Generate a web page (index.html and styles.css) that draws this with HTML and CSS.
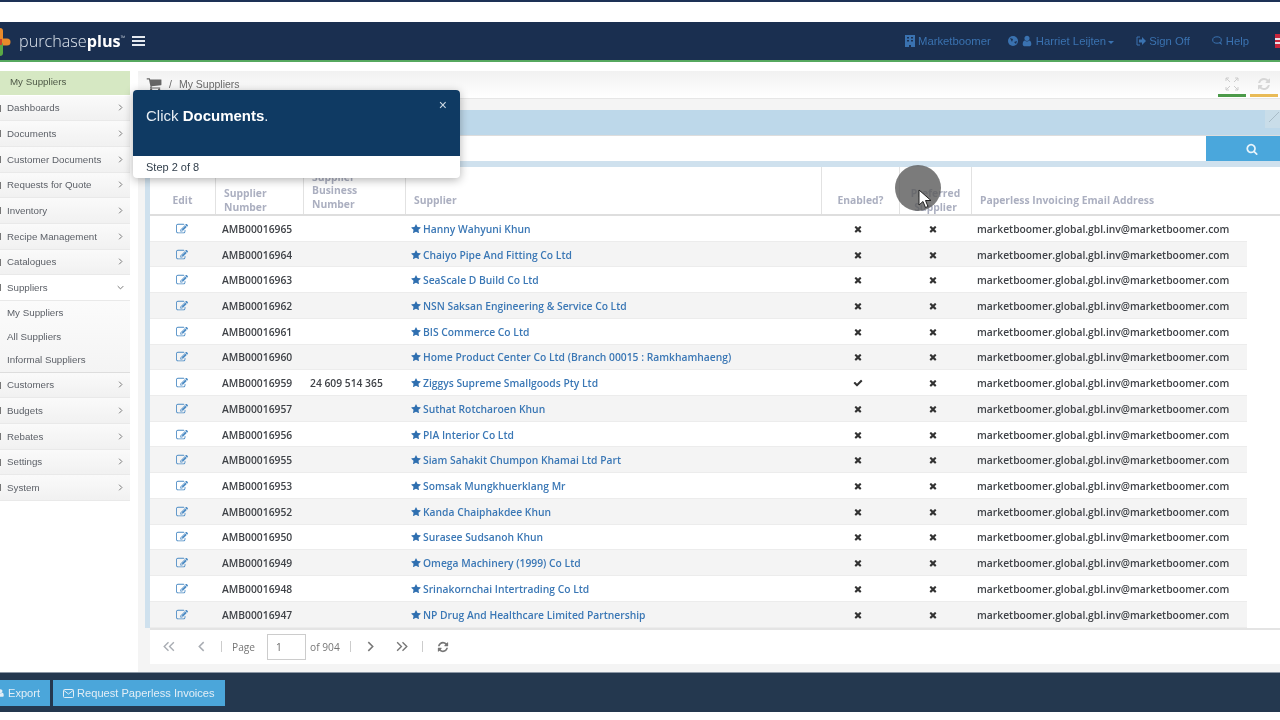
FILE: index.html
```html
<!DOCTYPE html>
<html>
<head>
  <title>My Suppliers</title>
  <link rel="stylesheet" href="styles.css">
</head>
<body>
  <svg class="defs" width="0" height="0">
    <symbol id="i-edit" viewBox="0 0 1792 1792"><path d="M888 1184l116-116-152-152-116 116v56h96v96h56zm440-720q-16-16-33 1l-350 350q-17 17-1 33t33-1l350-350q17-17 1-33zm80 594v190q0 119-84.5 203.5t-203.5 84.5h-832q-119 0-203.5-84.5t-84.5-203.5v-832q0-119 84.5-203.5t203.5-84.5h832q63 0 117 25 15 7 18 23 3 17-9 29l-49 49q-14 14-32 8-23-6-45-6h-832q-66 0-113 47t-47 113v832q0 66 47 113t113 47h832q66 0 113-47t47-113v-126q0-13 9-22l64-64q15-15 35-7t20 29zm-96-738l288 288-672 672h-288v-288zm444 132l-92 92-288-288 92-92q28-28 68-28t68 28l152 152q28 28 28 68t-28 68z"/></symbol>
    <symbol id="i-star" viewBox="0 0 1792 1792"><path d="M1728 647q0 22-26 48l-363 354 86 500q1 7 1 20 0 21-10.5 35.5t-30.5 14.5q-19 0-40-12l-449-236-449 236q-22 12-40 12-21 0-31.5-14.5t-10.5-35.5q0-6 2-20l86-500-364-354q-25-27-25-48 0-37 56-46l502-73 225-455q19-41 49-41t49 41l225 455 502 73q56 9 56 46z"/></symbol>
    <symbol id="i-times" viewBox="0 0 1792 1792"><path d="M1490 1322q0 40-28 68l-136 136q-28 28-68 28t-68-28l-294-294-294 294q-28 28-68 28t-68-28l-136-136q-28-28-28-68t28-68l294-294-294-294q-28-28-28-68t28-68l136-136q28-28 68-28t68 28l294 294 294-294q28-28 68-28t68 28l136 136q28 28 28 68t-28 68l-294 294 294 294q28 28 28 68z"/></symbol>
    <symbol id="i-check" viewBox="0 0 1792 1792"><path d="M1671 566q0 40-28 68l-724 724-136 136q-28 28-68 28t-68-28l-136-136-362-362q-28-28-28-68t28-68l136-136q28-28 68-28t68 28l294 295 656-657q28-28 68-28t68 28l136 136q28 28 28 68z"/></symbol>
    <symbol id="i-search" viewBox="0 0 1792 1792"><path d="M1216 832q0-185-131.5-316.5t-316.5-131.5-316.5 131.5-131.5 316.5 131.5 316.5 316.5 131.5 316.5-131.5 131.5-316.5zm512 832q0 52-38 90t-90 38q-54 0-90-38l-343-342q-179 124-399 124-143 0-273.5-55.5t-225-150-150-225-55.5-273.5 55.5-273.5 150-225 225-150 273.5-55.5 273.5 55.5 225 150 150 225 55.5 273.5q0 220-124 399l343 343q37 37 37 90z"/></symbol>
    <symbol id="i-refresh" viewBox="0 0 1792 1792"><path d="M1639 1056q0 5-1 7-64 268-268 434.5t-478 166.5q-146 0-282.5-55t-243.5-157l-129 129q-19 19-45 19t-45-19-19-45v-448q0-26 19-45t45-19h448q26 0 45 19t19 45-19 45l-137 137q71 66 161 102t187 36q134 0 250-65t186-179q11-17 53-117 8-23 30-23h192q13 0 22.5 9.5t9.5 22.5zm25-800v448q0 26-19 45t-45 19h-448q-26 0-45-19t-19-45 19-45l138-138q-148-137-349-137-134 0-250 65t-186 179q-11 17-53 117-8 23-30 23h-199q-13 0-22.5-9.5t-9.5-22.5v-7q65-268 270-434.5t480-166.5q146 0 284 55.5t245 156.5l130-129q19-19 45-19t45 19 19 45z"/></symbol>
    <symbol id="i-user" viewBox="0 0 1792 1792"><path d="M1536 1399q0 109-62.5 187t-150.5 78h-854q-88 0-150.5-78t-62.5-187q0-85 8.5-160.5t31.5-152 58.5-131 94-89 134.5-34.5q131 128 313 128t313-128q76 0 134.5 34.5t94 89 58.5 131 31.5 152 8.5 160.5zm-256-887q0 159-112.5 271.5t-271.5 112.5-271.5-112.5-112.5-271.5 112.5-271.5 271.5-112.5 271.5 112.5 112.5 271.5z"/></symbol>
    <symbol id="i-cart" viewBox="0 0 1792 1792"><path d="M704 1536q0 52-38 90t-90 38-90-38-38-90 38-90 90-38 90 38 38 90zm896 0q0 52-38 90t-90 38-90-38-38-90 38-90 90-38 90 38 38 90zm128-1088v512q0 24-16.5 42.5t-40.5 21.5l-1044 122q13 60 13 70 0 16-24 64h920q26 0 45 19t19 45-19 45-45 19h-1024q-26 0-45-19t-19-45q0-11 8-31.5t16-36 21.5-40 15.5-29.5l-177-823h-204q-26 0-45-19t-19-45 19-45 45-19h256q16 0 28.5 6.5t19.5 15.5 13 24.5 8 26 5.5 29.5 4.5 26h1201q26 0 45 19t19 45z"/></symbol>
    <symbol id="i-right" viewBox="0 0 10 10"><polyline points="3,1 7,5 3,9" fill="none" stroke="currentColor" stroke-width="1.4"/></symbol>
    <symbol id="i-left" viewBox="0 0 10 10"><polyline points="7,1 3,5 7,9" fill="none" stroke="currentColor" stroke-width="1.4"/></symbol>
    <symbol id="i-down" viewBox="0 0 10 10"><polyline points="1,3 5,7 9,3" fill="none" stroke="currentColor" stroke-width="1.4"/></symbol>
    <symbol id="i-first" viewBox="0 0 14 10"><polyline points="7,1 3,5 7,9" fill="none" stroke="currentColor" stroke-width="1.3"/><polyline points="12,1 8,5 12,9" fill="none" stroke="currentColor" stroke-width="1.3"/></symbol>
    <symbol id="i-last" viewBox="0 0 14 10"><polyline points="2,1 6,5 2,9" fill="none" stroke="currentColor" stroke-width="1.3"/><polyline points="7,1 11,5 7,9" fill="none" stroke="currentColor" stroke-width="1.3"/></symbol>
  </svg>

  <div class="page">
    <div class="topline"></div>

    <div class="navbar">
      <svg class="logo-mark" viewBox="0 0 26 28" width="26" height="28">
        <path d="M13 3v8" stroke="#e98a2b" stroke-width="6" stroke-linecap="round"/>
        <path d="M13 14h7" stroke="#e98a2b" stroke-width="7" stroke-linecap="round"/>
        <path d="M13 17v8" stroke="#5aa845" stroke-width="6" stroke-linecap="round"/>
        <path d="M9 14h6" stroke="#c8452e" stroke-width="6"/>
      </svg>
      <span class="logo-text">purchase<b>plus</b><sup>™</sup></span>
      <span class="burger"><i></i><i></i><i></i></span>
      <div class="nav-links">
        <a class="nav-link nav-market">
          <svg width="10" height="12" viewBox="0 0 10 12"><path d="M0 0h10v12H6v-2H4v2H0zM2 2v1.500h2V2zM6 2v1.500h2V2zM2 5v1.500h2V5zM6 5v1.500h2V5z" fill="currentColor" fill-rule="evenodd"/></svg>
          Marketboomer
        </a>
        <a class="nav-link nav-user">
          <svg width="10" height="10" viewBox="0 0 10 10"><circle cx="5" cy="5" r="5" fill="currentColor"/><path d="M2 2l3 1-1 3zM6 6l3-1-1 3z" fill="#1a2f50"/></svg>
          <svg width="12" height="12"><use href="#i-user"/></svg>
          Harriet Leijten<span class="caret"></span>
        </a>
        <a class="nav-link nav-sign">
          <svg width="10" height="10" viewBox="0 0 10 10"><path d="M4 1H1v8h3" fill="none" stroke="currentColor"/><path d="M3 3.500h3V1l4 4-4 4V6.500H3z" fill="currentColor"/></svg>
          Sign Off
        </a>
        <a class="nav-link nav-help">
          <svg width="11" height="10" viewBox="0 0 11 10"><ellipse cx="5" cy="4" rx="4.300" ry="3.200" fill="none" stroke="currentColor"/><path d="M7 7l3 2-1-3" fill="currentColor"/></svg>
          Help
        </a>
        <span class="flag"></span>
      </div>
    </div>
    <div class="navline"></div>

    <div class="main">
      <div class="sidebar">
        <div class="side-current">My Suppliers</div>
        <a class="side-item">Dashboards<svg class="side-arrow"><use href="#i-right"/></svg></a>
        <a class="side-item">Documents<svg class="side-arrow"><use href="#i-right"/></svg></a>
        <a class="side-item">Customer Documents<svg class="side-arrow"><use href="#i-right"/></svg></a>
        <a class="side-item">Requests for Quote<svg class="side-arrow"><use href="#i-right"/></svg></a>
        <a class="side-item">Inventory<svg class="side-arrow"><use href="#i-right"/></svg></a>
        <a class="side-item">Recipe Management<svg class="side-arrow"><use href="#i-right"/></svg></a>
        <a class="side-item">Catalogues<svg class="side-arrow"><use href="#i-right"/></svg></a>
        <a class="side-item side-open">Suppliers<svg class="side-arrow"><use href="#i-down"/></svg></a>
        <div class="side-sub">
          <a>My Suppliers</a>
          <a>All Suppliers</a>
          <a>Informal Suppliers</a>
        </div>
        <a class="side-item">Customers<svg class="side-arrow"><use href="#i-right"/></svg></a>
        <a class="side-item">Budgets<svg class="side-arrow"><use href="#i-right"/></svg></a>
        <a class="side-item">Rebates<svg class="side-arrow"><use href="#i-right"/></svg></a>
        <a class="side-item">Settings<svg class="side-arrow"><use href="#i-right"/></svg></a>
        <a class="side-item">System<svg class="side-arrow"><use href="#i-right"/></svg></a>
      </div>

      <div class="content">
        <div class="crumbs">
          <svg class="crumb-cart" width="16" height="16"><use href="#i-cart"/></svg>
          <span class="crumb-sep">/</span>
          <span>My Suppliers</span>
          <div class="crumb-tools">
            <span class="tool tool-green">
              <svg width="14" height="14" viewBox="0 0 14 14"><path d="M1 1l4 4M13 1L9 5M1 13l4-4M13 13L9 9M1 1h3M1 1v3M13 1h-3M13 1v3M1 13h3M1 13v-3M13 13h-3M13 13v-3" stroke="#ccc" fill="none"/></svg>
            </span>
            <span class="tool tool-yellow"><svg width="14" height="14" class="tool-refresh"><use href="#i-refresh"/></svg></span>
          </div>
        </div>

        <div class="panel">
          <div class="band"><span class="band-btn"><svg width="14" height="14" viewBox="0 0 14 14"><path d="M4 12L14 2" stroke="#a9bcc8"/></svg></span></div>
          <div class="search">
            <div class="search-input"></div>
            <div class="search-btn"><svg width="12" height="12"><use href="#i-search"/></svg></div>
          </div>
          <div class="band-thin"></div>

          <div class="grid-head">
            <div class="th th-center th-one">Edit</div>
            <div class="th">Supplier<br>Number</div>
            <div class="th th-three">Supplier<br>Business<br>Number</div>
            <div class="th th-one">Supplier</div>
            <div class="th th-center th-one">Enabled?</div>
            <div class="th th-center">Preferred<br>Supplier</div>
            <div class="th th-one">Paperless Invoicing Email Address</div>
          </div>

          <div class="row">
            <div class="c-edit"><svg><use href="#i-edit"/></svg></div><div class="c-num">AMB00016965</div><div class="c-abn"></div>
            <a class="c-name"><svg><use href="#i-star"/></svg>Hanny Wahyuni Khun</a>
            <div class="c-flag"><svg><use href="#i-times"/></svg></div><div class="c-flag"><svg><use href="#i-times"/></svg></div>
            <div class="c-mail">marketboomer.global.gbl.inv@marketboomer.com</div>
          </div>
          <div class="row">
            <div class="c-edit"><svg><use href="#i-edit"/></svg></div><div class="c-num">AMB00016964</div><div class="c-abn"></div>
            <a class="c-name"><svg><use href="#i-star"/></svg>Chaiyo Pipe And Fitting Co Ltd</a>
            <div class="c-flag"><svg><use href="#i-times"/></svg></div><div class="c-flag"><svg><use href="#i-times"/></svg></div>
            <div class="c-mail">marketboomer.global.gbl.inv@marketboomer.com</div>
          </div>
          <div class="row">
            <div class="c-edit"><svg><use href="#i-edit"/></svg></div><div class="c-num">AMB00016963</div><div class="c-abn"></div>
            <a class="c-name"><svg><use href="#i-star"/></svg>SeaScale D Build Co Ltd</a>
            <div class="c-flag"><svg><use href="#i-times"/></svg></div><div class="c-flag"><svg><use href="#i-times"/></svg></div>
            <div class="c-mail">marketboomer.global.gbl.inv@marketboomer.com</div>
          </div>
          <div class="row">
            <div class="c-edit"><svg><use href="#i-edit"/></svg></div><div class="c-num">AMB00016962</div><div class="c-abn"></div>
            <a class="c-name"><svg><use href="#i-star"/></svg>NSN Saksan Engineering &amp; Service Co Ltd</a>
            <div class="c-flag"><svg><use href="#i-times"/></svg></div><div class="c-flag"><svg><use href="#i-times"/></svg></div>
            <div class="c-mail">marketboomer.global.gbl.inv@marketboomer.com</div>
          </div>
          <div class="row">
            <div class="c-edit"><svg><use href="#i-edit"/></svg></div><div class="c-num">AMB00016961</div><div class="c-abn"></div>
            <a class="c-name"><svg><use href="#i-star"/></svg>BIS Commerce Co Ltd</a>
            <div class="c-flag"><svg><use href="#i-times"/></svg></div><div class="c-flag"><svg><use href="#i-times"/></svg></div>
            <div class="c-mail">marketboomer.global.gbl.inv@marketboomer.com</div>
          </div>
          <div class="row">
            <div class="c-edit"><svg><use href="#i-edit"/></svg></div><div class="c-num">AMB00016960</div><div class="c-abn"></div>
            <a class="c-name"><svg><use href="#i-star"/></svg>Home Product Center Co Ltd (Branch 00015 : Ramkhamhaeng)</a>
            <div class="c-flag"><svg><use href="#i-times"/></svg></div><div class="c-flag"><svg><use href="#i-times"/></svg></div>
            <div class="c-mail">marketboomer.global.gbl.inv@marketboomer.com</div>
          </div>
          <div class="row">
            <div class="c-edit"><svg><use href="#i-edit"/></svg></div><div class="c-num">AMB00016959</div><div class="c-abn">24 609 514 365</div>
            <a class="c-name"><svg><use href="#i-star"/></svg>Ziggys Supreme Smallgoods Pty Ltd</a>
            <div class="c-flag"><svg><use href="#i-check"/></svg></div><div class="c-flag"><svg><use href="#i-times"/></svg></div>
            <div class="c-mail">marketboomer.global.gbl.inv@marketboomer.com</div>
          </div>
          <div class="row">
            <div class="c-edit"><svg><use href="#i-edit"/></svg></div><div class="c-num">AMB00016957</div><div class="c-abn"></div>
            <a class="c-name"><svg><use href="#i-star"/></svg>Suthat Rotcharoen Khun</a>
            <div class="c-flag"><svg><use href="#i-times"/></svg></div><div class="c-flag"><svg><use href="#i-times"/></svg></div>
            <div class="c-mail">marketboomer.global.gbl.inv@marketboomer.com</div>
          </div>
          <div class="row">
            <div class="c-edit"><svg><use href="#i-edit"/></svg></div><div class="c-num">AMB00016956</div><div class="c-abn"></div>
            <a class="c-name"><svg><use href="#i-star"/></svg>PIA Interior Co Ltd</a>
            <div class="c-flag"><svg><use href="#i-times"/></svg></div><div class="c-flag"><svg><use href="#i-times"/></svg></div>
            <div class="c-mail">marketboomer.global.gbl.inv@marketboomer.com</div>
          </div>
          <div class="row">
            <div class="c-edit"><svg><use href="#i-edit"/></svg></div><div class="c-num">AMB00016955</div><div class="c-abn"></div>
            <a class="c-name"><svg><use href="#i-star"/></svg>Siam Sahakit Chumpon Khamai Ltd Part</a>
            <div class="c-flag"><svg><use href="#i-times"/></svg></div><div class="c-flag"><svg><use href="#i-times"/></svg></div>
            <div class="c-mail">marketboomer.global.gbl.inv@marketboomer.com</div>
          </div>
          <div class="row">
            <div class="c-edit"><svg><use href="#i-edit"/></svg></div><div class="c-num">AMB00016953</div><div class="c-abn"></div>
            <a class="c-name"><svg><use href="#i-star"/></svg>Somsak Mungkhuerklang Mr</a>
            <div class="c-flag"><svg><use href="#i-times"/></svg></div><div class="c-flag"><svg><use href="#i-times"/></svg></div>
            <div class="c-mail">marketboomer.global.gbl.inv@marketboomer.com</div>
          </div>
          <div class="row">
            <div class="c-edit"><svg><use href="#i-edit"/></svg></div><div class="c-num">AMB00016952</div><div class="c-abn"></div>
            <a class="c-name"><svg><use href="#i-star"/></svg>Kanda Chaiphakdee Khun</a>
            <div class="c-flag"><svg><use href="#i-times"/></svg></div><div class="c-flag"><svg><use href="#i-times"/></svg></div>
            <div class="c-mail">marketboomer.global.gbl.inv@marketboomer.com</div>
          </div>
          <div class="row">
            <div class="c-edit"><svg><use href="#i-edit"/></svg></div><div class="c-num">AMB00016950</div><div class="c-abn"></div>
            <a class="c-name"><svg><use href="#i-star"/></svg>Surasee Sudsanoh Khun</a>
            <div class="c-flag"><svg><use href="#i-times"/></svg></div><div class="c-flag"><svg><use href="#i-times"/></svg></div>
            <div class="c-mail">marketboomer.global.gbl.inv@marketboomer.com</div>
          </div>
          <div class="row">
            <div class="c-edit"><svg><use href="#i-edit"/></svg></div><div class="c-num">AMB00016949</div><div class="c-abn"></div>
            <a class="c-name"><svg><use href="#i-star"/></svg>Omega Machinery (1999) Co Ltd</a>
            <div class="c-flag"><svg><use href="#i-times"/></svg></div><div class="c-flag"><svg><use href="#i-times"/></svg></div>
            <div class="c-mail">marketboomer.global.gbl.inv@marketboomer.com</div>
          </div>
          <div class="row">
            <div class="c-edit"><svg><use href="#i-edit"/></svg></div><div class="c-num">AMB00016948</div><div class="c-abn"></div>
            <a class="c-name"><svg><use href="#i-star"/></svg>Srinakornchai Intertrading Co Ltd</a>
            <div class="c-flag"><svg><use href="#i-times"/></svg></div><div class="c-flag"><svg><use href="#i-times"/></svg></div>
            <div class="c-mail">marketboomer.global.gbl.inv@marketboomer.com</div>
          </div>
          <div class="row">
            <div class="c-edit"><svg><use href="#i-edit"/></svg></div><div class="c-num">AMB00016947</div><div class="c-abn"></div>
            <a class="c-name"><svg><use href="#i-star"/></svg>NP Drug And Healthcare Limited Partnership</a>
            <div class="c-flag"><svg><use href="#i-times"/></svg></div><div class="c-flag"><svg><use href="#i-times"/></svg></div>
            <div class="c-mail">marketboomer.global.gbl.inv@marketboomer.com</div>
          </div>
        </div>

        <div class="pager">
          <svg class="pg-first"><use href="#i-first"/></svg>
          <svg class="pg-prev"><use href="#i-left"/></svg>
          <span class="pg-sep pg-sep-a"></span>
          <span class="pg-text">Page</span>
          <span class="pg-input">1</span>
          <span class="pg-text">of 904</span>
          <span class="pg-sep pg-sep-b"></span>
          <svg class="pg-next"><use href="#i-right"/></svg>
          <svg class="pg-last"><use href="#i-last"/></svg>
          <span class="pg-sep pg-sep-c"></span>
          <svg class="pg-reload"><use href="#i-refresh"/></svg>
        </div>
      </div>
    </div>

    <div class="footer">
      <a class="btn btn-export">
        <svg width="9" height="10" class="btn-ico"><use href="#i-user"/></svg>Export
      </a>
      <a class="btn">
        <svg width="11" height="9" viewBox="0 0 11 9" class="btn-ico"><rect x=".5" y=".5" width="10" height="8" rx="1" fill="none" stroke="currentColor"/><polyline points="1,1.500 5.500,5 10,1.500" fill="none" stroke="currentColor"/></svg>Request Paperless Invoices
      </a>
    </div>

    <!-- tour popover and recorded mouse pointer sit over the page -->
    <div class="tour">
      <div class="tour-body">
        Click <b>Documents</b>.
        <span class="tour-close">×</span>
      </div>
      <div class="tour-foot">Step 2 of 8</div>
    </div>
    <div class="pointer-dot"></div>
    <svg class="pointer" width="14" height="20" viewBox="0 0 14 20"><path d="M1 1v15l4-3.500 2.500 6 2.500-1-2.500-6H13z" fill="#fff" stroke="#222" stroke-width="1"/></svg>
  </div>
</body>
</html>
```

FILE: styles.css
```css
html, body {
  margin: 0;
  padding: 0;
  height: 720px;
  overflow: hidden;
  background-color: #fff;
}

.defs {
  position: absolute;
}

.page {
  position: relative;
  display: flex;
  flex-direction: column;
  width: 1280px;
  height: 720px;
  overflow: hidden;
  background-color: #fff;
  font-family: "Liberation Sans", Arial, sans-serif;
  filter: blur(0.45px);
}

a {
  color: inherit;
  text-decoration: none;
}

svg {
  fill: currentColor;
}

.topline {
  height: 2px;
  margin-bottom: 20px;
  background-color: #1d3156;
}

/* navbar */

.navbar {
  display: flex;
  align-items: center;
  height: 38px;
  flex-shrink: 0;
  background-color: #1a2f50;
  color: #3a72b0;
  font-size: 11.3px;
}

.navline {
  height: 2px;
  flex-shrink: 0;
  margin-bottom: 9px;
  background-color: #56a85f;
}

.logo-mark {
  margin-left: -13px;
  margin-top: 2px;
  flex-shrink: 0;
}

.logo-text {
  margin-left: 6px;
  color: #dfe6ee;
  font-family: "Open Sans", sans-serif;
  font-size: 16.2px;
  font-weight: 300;
}

.logo-text b {
  font-weight: 700;
  color: #fff;
}

.logo-text sup {
  font-size: 6px;
  vertical-align: 7px;
  line-height: 0;
}

.burger {
  display: flex;
  flex-direction: column;
  gap: 2px;
  margin-left: 7px;
}

.burger i {
  display: block;
  width: 13px;
  height: 2px;
  background-color: #e4e9ef;
}

.nav-links {
  display: flex;
  align-items: center;
  margin-left: auto;
}

.nav-link {
  display: flex;
  align-items: center;
  gap: 3px;
  white-space: nowrap;
}

.nav-user {
  margin-left: 17px;
}

.nav-sign {
  margin-left: 22px;
}

.nav-help {
  margin-left: 22px;
}

.caret {
  width: 0;
  height: 0;
  margin-left: -1px;
  margin-top: 2px;
  border-top: 3px solid #3a72b0;
  border-left: 3px solid transparent;
  border-right: 3px solid transparent;
}

.flag {
  display: block;
  width: 9px;
  height: 14px;
  margin-left: 26px;
  margin-right: -4px;
  background: linear-gradient(#c9263c 30%, #e9dfe6 30%, #e9dfe6 45%, #c9263c 45%, #c9263c 60%, #e9dfe6 60%, #e9dfe6 70%, #c9263c 70%);
}

/* main area */

.main {
  display: flex;
  flex: 1;
  min-height: 0;
}

.sidebar {
  width: 130px;
  flex-shrink: 0;
  margin-right: 8px;
  color: #5d6168;
  font-size: 9.75px;
}

.side-current {
  height: 23.5px;
  line-height: 22.5px;
  margin-bottom: 1px;
  padding-left: 10px;
  background-color: #d6e8c3;
  color: #4f5a48;
}

.side-item {
  position: relative;
  display: flex;
  align-items: center;
  justify-content: space-between;
  box-sizing: border-box;
  height: 25.7px;
  padding: 0 6px 0 7px;
  background: linear-gradient(#fafafa, #f1f1f1);
  border-bottom: 1px solid #e9e9e9;
}

.side-item::before {
  content: "";
  position: absolute;
  left: 0;
  top: 9px;
  width: 1px;
  height: 7px;
  background-color: #777;
}

.side-open {
  background: #fff;
}

.side-arrow {
  width: 7px;
  height: 7px;
  color: #777;
}

.side-sub {
  display: flex;
  flex-direction: column;
  height: 71.5px;
  background: linear-gradient(#fbfbfb, #f4f4f4);
  border-bottom: 1px solid #ddd;
  box-sizing: border-box;
}

.side-sub a {
  height: 23.5px;
  line-height: 23.5px;
  padding-left: 7px;
}

.content {
  display: flex;
  flex-direction: column;
  flex: 1;
  min-width: 0;
  background-color: #f4f4f4;
}

.crumbs {
  display: flex;
  align-items: center;
  gap: 6px;
  box-sizing: border-box;
  height: 28px;
  padding: 0 2px 1px 8px;
  margin-bottom: 11px;
  background: linear-gradient(#f1f1f1, #fff);
  border-bottom: 1px solid #e6e6e6;
  color: #6a6a6a;
  font-size: 10.5px;
}

.crumb-cart {
  color: #666;
}

.crumb-sep {
  margin: 0 1px;
}

.crumb-tools {
  display: flex;
  gap: 4px;
  margin-left: auto;
}

.tool {
  display: flex;
  align-items: center;
  justify-content: center;
  box-sizing: border-box;
  width: 28px;
  height: 24px;
  padding-top: 1px;
  margin-top: 2px;
  border-bottom: 3px solid #4c9a49;
}

.tool-yellow {
  border-bottom-color: #e9bb57;
}

.tool-refresh {
  color: #d6d6d6;
}

.panel {
  margin-left: 7px;
  border-left: 5px solid #cfe1ee;
  background-color: #fff;
}

.band {
  display: flex;
  justify-content: flex-end;
  height: 25px;
  margin-left: -4px;
  background-color: #bdd8ea;
}

.band-btn {
  width: 15px;
  height: 18px;
  background-color: #c9dde9;
}

.search {
  display: flex;
  height: 26px;
  border-top: 1px solid #ddd;
  box-sizing: border-box;
}

.search-input {
  flex: 1;
  background-color: #fff;
}

.search-btn {
  display: flex;
  align-items: center;
  justify-content: center;
  box-sizing: border-box;
  width: 74px;
  padding-left: 18px;
  background-color: #4aa7dc;
  color: #e8f4fb;
}

.band-thin {
  height: 6px;
  background-color: #cfe1ee;
}

.grid-head {
  display: grid;
  grid-template-columns: 65px 88px 102px 416px 78px 72px 309px;
  height: 47px;
  overflow: hidden;
  border-bottom: 2px solid #dedede;
  color: #abafc0;
  font-family: "Open Sans", sans-serif;
  font-size: 10.33px;
  font-weight: 700;
  line-height: 13.5px;
}

.th {
  display: flex;
  align-items: flex-end;
  box-sizing: border-box;
  padding: 0 0 0 8px;
  height: 47px;
  border-left: 1px solid #e2e2e2;
}

.th:first-child {
  border-left: 0;
}

.th-center {
  justify-content: center;
  text-align: center;
  padding-left: 0;
}

.th-one {
  padding-bottom: 7px;
}

.th-three {
  padding-bottom: 3px;
}

.row {
  display: grid;
  grid-template-columns: 65px 88px 102px 416px 78px 72px 276px;
  align-items: center;
  width: 1097px;
  height: 25.73px;
  padding-top: 1px;
  color: #3f4247;
  font-family: "Open Sans", sans-serif;
  font-size: 10.3px;
  font-weight: 600;
  border-bottom: 1px solid #ececec;
  box-sizing: border-box;
}

.row:nth-child(even) {
  background-color: #f4f4f4;
}

.c-edit {
  display: flex;
  justify-content: center;
  padding-right: 2px;
  color: #4a8ac4;
}

.c-edit svg {
  width: 12px;
  height: 12px;
}

.c-num {
  padding-left: 7px;
}

.c-abn {
  padding-left: 7px;
}

.c-name {
  display: flex;
  align-items: center;
  gap: 2px;
  padding-left: 6px;
  color: #3a77b5;
}

.c-name svg {
  width: 10px;
  height: 10px;
  color: #2f6fb0;
}

.c-flag {
  display: flex;
  justify-content: center;
  padding-right: 4px;
  color: #333;
}

.c-flag svg {
  width: 10px;
  height: 10px;
}

.c-mail {
  padding-left: 6px;
  white-space: nowrap;
}

/* pager */

.pager {
  display: flex;
  align-items: center;
  height: 36px;
  margin-left: 12px;
  padding-left: 11px;
  background-color: #fff;
  border-top: 2px solid #e4e4e4;
  box-sizing: border-box;
  color: #8b8f96;
  font-family: "Open Sans", sans-serif;
  font-size: 10.2px;
}

.pager svg {
  color: #a9adb3;
}

.pg-first, .pg-last {
  width: 15px;
  height: 11px;
}

.pg-prev, .pg-next {
  width: 11px;
  height: 11px;
}

.pg-prev {
  margin-left: 20px;
}

.pg-next {
  margin-left: 4px;
}

.pager .pg-next, .pager .pg-last {
  color: #777;
}

.pg-last {
  margin-left: 19px;
}

.pg-sep {
  width: 1px;
  height: 11px;
  background-color: #ccc;
}

.pg-sep-a {
  margin: 0 10px 0 14px;
}

.pg-sep-b {
  margin: 0 10px;
}

.pg-sep-c {
  margin: 0 14px 0 12px;
}

.pg-text {
  color: #777;
}

.pg-input {
  box-sizing: border-box;
  width: 39px;
  height: 26px;
  line-height: 24px;
  margin: 0 4px 0 12px;
  padding-left: 8px;
  border: 1px solid #ccc;
  color: #666;
}

.pager .pg-reload {
  width: 12px;
  height: 12px;
  color: #777;
}

/* footer */

.footer {
  display: flex;
  align-items: center;
  gap: 3px;
  box-sizing: border-box;
  height: 40px;
  flex-shrink: 0;
  margin-bottom: 8px;
  padding: 1px 0 0;
  background-color: #24384f;
  border-top: 1px solid #8b97a5;
}

.btn {
  display: flex;
  align-items: center;
  gap: 3px;
  height: 26px;
  padding: 0 10px;
  background-color: #4ba6da;
  color: #e3eef6;
  font-size: 11.1px;
}

.btn-export {
  margin-left: -8px;
  padding-left: 4px;
}

.btn-ico {
  flex-shrink: 0;
}

/* tour popover */

.tour {
  position: absolute;
  left: 133px;
  top: 90px;
  width: 327px;
  border-radius: 4px;
  overflow: hidden;
  background-color: #fff;
  box-shadow: 0 2px 10px rgba(0, 0, 0, 0.3);
}

.tour-body {
  position: relative;
  box-sizing: border-box;
  height: 66px;
  padding: 17px 13px 0;
  background-color: #0f3a63;
  color: #e6edf3;
  font-size: 15px;
}

.tour-body b {
  color: #fff;
}

.tour-close {
  position: absolute;
  right: 13px;
  top: 7px;
  font-size: 14px;
  color: #cfdae4;
}

.tour-foot {
  box-sizing: border-box;
  height: 22px;
  padding: 5px 13px 0;
  color: #33404d;
  font-size: 11px;
}

.pointer-dot {
  position: absolute;
  left: 895px;
  top: 165px;
  width: 46px;
  height: 46px;
  border-radius: 50%;
  background-color: rgba(90, 90, 90, 0.8);
}

.pointer {
  position: absolute;
  left: 918px;
  top: 189px;
}
```
